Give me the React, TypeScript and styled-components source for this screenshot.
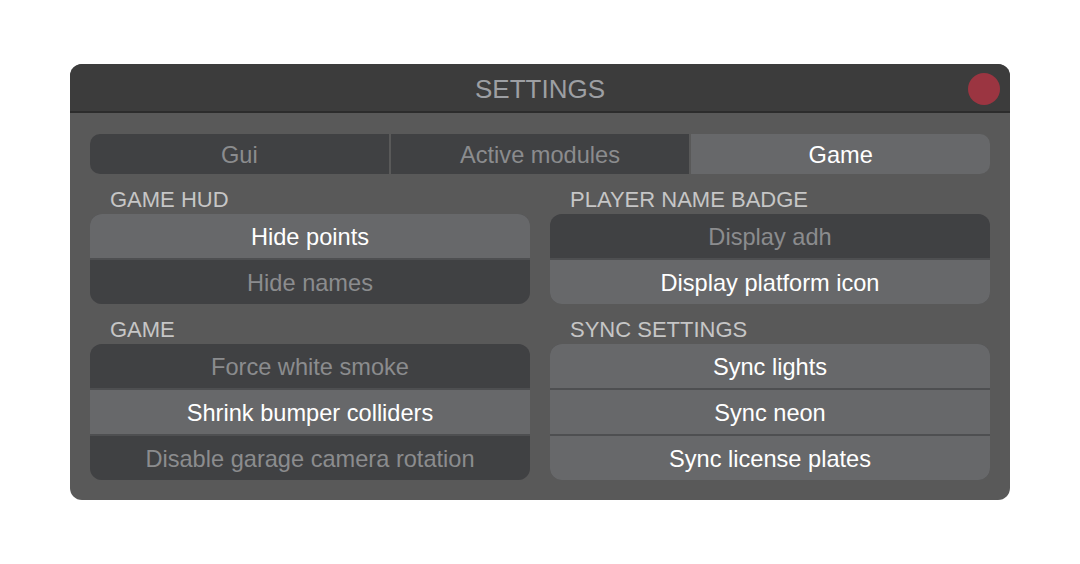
import React, { useState } from 'react';
import styled, { createGlobalStyle } from 'styled-components';

const colors = {
  page: '#ffffff',
  header: '#3c3c3c',
  headerLine: '#2c2c2c',
  body: '#595959',
  off: '#404143',
  on: '#67686a',
  divider: '#4e4f51',
  textOn: '#ffffff',
  textOff: '#8b8c8e',
  title: '#9d9fa3',
  heading: '#c6c6c6',
  close: '#9b3541',
};

const GlobalStyle = createGlobalStyle`
  body {
    margin: 0;
    background: ${colors.page};
    font-family: 'Liberation Sans', Arial, sans-serif;
  }
`;

const Page = styled.div`
  padding: 64px 70px;
`;

const Panel = styled.div`
  position: relative;
  width: 940px;
  border-radius: 12px;
  overflow: hidden;
  background: ${colors.body};
`;

const Header = styled.div`
  height: 49px;
  padding-top: 4px;
  box-sizing: border-box;
  background: ${colors.header};
  border-bottom: 2px solid ${colors.headerLine};
  display: flex;
  align-items: center;
  justify-content: center;
`;

const Title = styled.h1`
  margin: 0;
  font-size: 26px;
  font-weight: normal;
  color: ${colors.title};
`;

const CloseButton = styled.button`
  position: absolute;
  top: 9px;
  right: 10px;
  width: 32px;
  height: 32px;
  border: none;
  padding: 0;
  border-radius: 50%;
  background: ${colors.close};
  cursor: pointer;
`;

const Content = styled.div`
  padding: 21px 20px 20px;
`;

const Tabs = styled.div`
  display: flex;
  gap: 2px;
  height: 40px;
  border-radius: 10px;
  overflow: hidden;
`;

const Tab = styled.div<{ active?: boolean }>`
  flex: 1;
  display: flex;
  align-items: center;
  justify-content: center;
  padding-top: 3px;
  font-size: 23.6px;
  background: ${(props) => (props.active ? colors.on : colors.off)};
  color: ${(props) => (props.active ? colors.textOn : colors.textOff)};
  cursor: pointer;
`;

const Columns = styled.div`
  display: grid;
  grid-template-columns: 1fr 1fr;
  column-gap: 20px;
`;

const Section = styled.div`
  display: flex;
  flex-direction: column;
`;

const Heading = styled.div`
  height: 40px;
  box-sizing: border-box;
  padding: 14px 0 0 20px;
  font-size: 22px;
  line-height: 24px;
  color: ${colors.heading};
`;

const Group = styled.div`
  display: flex;
  flex-direction: column;
  gap: 2px;
  border-radius: 12px;
  overflow: hidden;
  background: ${colors.divider};
`;

const Toggle = styled.div<{ active?: boolean }>`
  height: 44px;
  line-height: 46px;
  text-align: center;
  font-size: 23.6px;
  background: ${(props) => (props.active ? colors.on : colors.off)};
  color: ${(props) => (props.active ? colors.textOn : colors.textOff)};
  cursor: pointer;
`;

type Option = { label: string; on: boolean };

const initial: Record<string, Option[]> = {
  'GAME HUD': [
    { label: 'Hide points', on: true },
    { label: 'Hide names', on: false },
  ],
  'PLAYER NAME BADGE': [
    { label: 'Display adh', on: false },
    { label: 'Display platform icon', on: true },
  ],
  GAME: [
    { label: 'Force white smoke', on: false },
    { label: 'Shrink bumper colliders', on: true },
    { label: 'Disable garage camera rotation', on: false },
  ],
  'SYNC SETTINGS': [
    { label: 'Sync lights', on: true },
    { label: 'Sync neon', on: true },
    { label: 'Sync license plates', on: true },
  ],
};

const tabs = ['Gui', 'Active modules', 'Game'];

export default function App() {
  const [tab, setTab] = useState('Game');
  const [options, setOptions] = useState(initial);

  const flip = (section: string, index: number) => {
    setOptions((prev) => ({
      ...prev,
      [section]: prev[section].map((o, i) => (i === index ? { ...o, on: !o.on } : o)),
    }));
  };

  return (
    <Page>
      <GlobalStyle />
      <Panel>
        <Header>
          <Title>SETTINGS</Title>
        </Header>
        <CloseButton aria-label="Close" />
        <Content>
          <Tabs>
            {tabs.map((t) => (
              <Tab key={t} active={t === tab} onClick={() => setTab(t)}>
                {t}
              </Tab>
            ))}
          </Tabs>
          <Columns>
            {Object.keys(options).map((section) => (
              <Section key={section}>
                <Heading>{section}</Heading>
                <Group>
                  {options[section].map((o, i) => (
                    <Toggle key={o.label} active={o.on} onClick={() => flip(section, i)}>
                      {o.label}
                    </Toggle>
                  ))}
                </Group>
              </Section>
            ))}
          </Columns>
        </Content>
      </Panel>
    </Page>
  );
}
